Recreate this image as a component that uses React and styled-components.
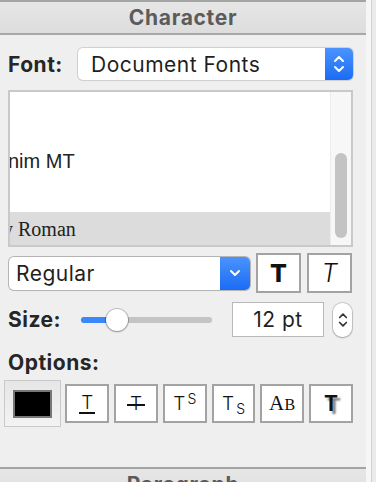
import React from 'react'
import styled, { createGlobalStyle } from 'styled-components'

const GlobalStyle = createGlobalStyle`
  html, body {
    margin: 0;
    padding: 0;
    background: #ececec;
    font-family: Inter, "Noto Sans", sans-serif;
    color: #222;
  }
`

const Page = styled.div`
  display: flex;
  align-items: flex-start;
  width: 376px;
  height: 482px;
  overflow: hidden;
  background: #efefef;
`

const Panel = styled.div`
  width: 366px;
  flex: none;
  display: flex;
  flex-direction: column;
  background: #efefef;
  border-top: 2px solid #a4a4a4;
`

const Gutter = styled.div`
  flex: 1;
  align-self: stretch;
  background: linear-gradient(to right, #f6f6f6 0 5px, #d2d2d2 5px 6px, #ebebeb 6px);
`

const Header = styled.div`
  height: 31px;
  flex: none;
  display: flex;
  align-items: center;
  justify-content: center;
  background: linear-gradient(#e6e6e6, #dddddd);
  border-bottom: 2px solid #a8a8a8;
  border-top: ${p => (p.$top ? '2px solid #a4a4a4' : 'none')};
  font-size: 21px;
  font-weight: 700;
  color: #5b5b5b;
  letter-spacing: 0.7px;
  padding-bottom: ${p => (p.$top ? 6 : 0)}px;
`

const Body = styled.div`
  flex: none;
  display: flex;
  flex-direction: column;
  padding: 0 13px 40px 8px;
`

const Label = styled.div`
  font-size: 21px;
  font-weight: 700;
  color: #262626;
  letter-spacing: 0.5px;
  width: ${p => (p.$w ? `${p.$w}px` : 'auto')};
  flex: none;
`

const FontRow = styled.div`
  display: flex;
  align-items: center;
  justify-content: space-between;
  margin-top: 13px;
  height: 32px;
`

const Popup = styled.div`
  display: flex;
  width: ${p => p.$w}px;
  height: ${p => p.$h}px;
  border-radius: 5px;
  background: #fff;
  box-shadow: 0 0 0 1px ${p => p.$edge}, 0 1px 1px rgba(0, 0, 0, 0.08);
  overflow: hidden;
`

const PopupText = styled.div`
  flex: 1;
  display: flex;
  align-items: center;
  padding-left: ${p => p.$pad}px;
  font-size: 21px;
  letter-spacing: 0.5px;
  color: #1f1f1f;
`

const PopupArrow = styled.div`
  width: ${p => p.$w}px;
  display: flex;
  align-items: center;
  justify-content: center;
  background: linear-gradient(#4b93ff, #1a6cf3);
`

const List = styled.div`
  margin-top: 10px;
  height: 153px;
  display: flex;
  border: 2px solid #c9c9c9;
  background: #fff;
`

const Rows = styled.div`
  flex: 1;
  overflow: hidden;
`

const RowsInner = styled.div`
  margin-top: -16px;
`

const FontItem = styled.div`
  height: 34px;
  display: flex;
  align-items: center;
  white-space: nowrap;
  background: ${p => (p.$selected ? '#dcdcdc' : 'transparent')};
  font-family: ${p => (p.$serif ? '"Liberation Serif", serif' : '"Liberation Sans", sans-serif')};
  font-size: 20px;
  color: #222;
  span {
    margin-left: ${p => p.$shift}px;
  }
`

const ScrollTrack = styled.div`
  width: 20px;
  background: #f7f7f7;
  border-left: 1px solid #ececec;
  display: flex;
  justify-content: center;
`

const Thumb = styled.div`
  width: 12px;
  height: 85px;
  margin-top: 61px;
  border-radius: 6px;
  background: #c3c3c3;
`

const StyleRow = styled.div`
  display: flex;
  align-items: center;
  margin-top: 6px;
  height: 40px;
  padding-left: 1px;
  gap: 6px;
`

const StyleButton = styled.div`
  width: 41px;
  height: 36px;
  border: 2px solid #a3a3a3;
  background: #fff;
  display: flex;
  align-items: center;
  justify-content: center;
  font-size: 25px;
  font-weight: ${p => (p.$italic ? 300 : 800)};
  font-style: ${p => (p.$italic ? 'italic' : 'normal')};
  color: #111;
`

const SizeRow = styled.div`
  display: flex;
  align-items: center;
  margin-top: 9px;
  height: 35px;
`

const Slider = styled.div`
  position: relative;
  width: 131px;
  height: 6px;
  border-radius: 3px;
  background: #c4c4c4;
`

const SliderFill = styled.div`
  height: 100%;
  border-radius: 3px;
  background: #3a86fb;
`

const Knob = styled.div`
  position: absolute;
  top: 50%;
  width: 22px;
  height: 22px;
  margin: -11px 0 0 -11px;
  border-radius: 50%;
  background: #fff;
  box-shadow: 0 0 0 1px rgba(0, 0, 0, 0.2), 0 1px 2px rgba(0, 0, 0, 0.25);
`

const SizeField = styled.div`
  width: 90px;
  height: 33px;
  margin-left: 20px;
  border: 1px solid #b9b9b9;
  background: #fff;
  display: flex;
  align-items: center;
  justify-content: center;
  font-size: 21px;
  letter-spacing: 0.5px;
  color: #1f1f1f;
`

const Stepper = styled.div`
  width: 19px;
  height: 34px;
  margin-left: 9px;
  border-radius: 9px;
  background: #fff;
  box-shadow: 0 0 0 1px rgba(0, 0, 0, 0.15), 0 1px 2px rgba(0, 0, 0, 0.2);
  display: flex;
  align-items: center;
  justify-content: center;
`

const OptionsLabel = styled(Label)`
  margin-top: 14px;
  height: 24px;
  line-height: 24px;
`

const OptionsRow = styled.div`
  display: flex;
  align-items: center;
  margin-top: 5px;
  margin-left: -4px;
  height: 47px;
  gap: 5px;
`

const ColorWell = styled.div`
  width: 57px;
  height: 45px;
  border: 1px solid #c9c9c9;
  background: linear-gradient(#e6e6e6, #f3f3f3);
  display: flex;
  align-items: center;
  justify-content: center;
  margin-right: -1px;
`

const Swatch = styled.div`
  width: 35px;
  height: 24px;
  background: #000;
  border: 2px solid #777;
`

const OptionButton = styled.div`
  width: 41px;
  height: 35px;
  border: 2px solid #a3a3a3;
  background: #fff;
  display: flex;
  align-items: center;
  justify-content: center;
  color: #111;
  font-size: 19px;
  font-weight: 300;
`

const Under = styled.span`
  display: inline-block;
  padding: 0 2px 1px;
  line-height: 17px;
  border-bottom: 2px solid #111;
`

const Strike = styled.span`
  position: relative;
  display: inline-block;
  &::after {
    content: '';
    position: absolute;
    left: -3px;
    right: -3px;
    top: 52%;
    height: 2px;
    background: #111;
  }
`

const Script = styled.span`
  font-size: 14px;
  position: relative;
  top: ${p => (p.$up ? -5 : 5)}px;
  margin-left: 2px;
`

const SmallCaps = styled.span`
  font-family: "Liberation Serif", serif;
  font-size: 21px;
  font-weight: 400;
  letter-spacing: 0.5px;
  small {
    font-size: 16px;
  }
`

const Shadowed = styled.span`
  font-size: 21px;
  font-weight: 700;
  text-shadow: 3px 3px 2px rgba(0, 0, 0, 0.5);
`

const Chevrons = ({ color, both = true, w = 12 }) => (
  <svg width={w} height={both ? 20 : 10} viewBox={both ? '0 0 12 20' : '0 5 12 10'} fill="none"
    stroke={color} strokeWidth="2" strokeLinecap="round" strokeLinejoin="round">
    {both && <path d="M2 7 L6 3 L10 7" />}
    <path d="M2 13 L6 17 L10 13" transform={both ? '' : 'translate(0 -5)'} />
  </svg>
)

export default function App() {
  const size = 0.275
  return (
    <Page>
      <GlobalStyle />
      <Panel>
        <Header>Character</Header>
        <Body>
          <FontRow>
            <Label>Font:</Label>
            <Popup $w={275} $h={32} $edge="#d0d0d0">
              <PopupText $pad={13}>Document Fonts</PopupText>
              <PopupArrow $w={28}><Chevrons color="#fff" /></PopupArrow>
            </Popup>
          </FontRow>

          <List>
            <Rows>
              <RowsInner>
                <FontItem />
                <FontItem />
                <FontItem $shift={-2}><span>nim MT</span></FontItem>
                <FontItem />
                <FontItem $selected $serif $shift={-7}><span>y Roman</span></FontItem>
              </RowsInner>
            </Rows>
            <ScrollTrack><Thumb /></ScrollTrack>
          </List>

          <StyleRow>
            <Popup $w={241} $h={33} $edge="#b5b5b5">
              <PopupText $pad={7}>Regular</PopupText>
              <PopupArrow $w={30}><Chevrons color="#fff" both={false} /></PopupArrow>
            </Popup>
            <StyleButton>T</StyleButton>
            <StyleButton $italic>T</StyleButton>
          </StyleRow>

          <SizeRow>
            <Label $w={73}>Size:</Label>
            <Slider>
              <SliderFill style={{ width: `${size * 100}%` }} />
              <Knob style={{ left: `${size * 100}%` }} />
            </Slider>
            <SizeField>12 pt</SizeField>
            <Stepper><Chevrons color="#333" w={10} /></Stepper>
          </SizeRow>

          <OptionsLabel>Options:</OptionsLabel>
          <OptionsRow>
            <ColorWell><Swatch /></ColorWell>
            <OptionButton><Under>T</Under></OptionButton>
            <OptionButton><Strike>T</Strike></OptionButton>
            <OptionButton>T<Script $up>S</Script></OptionButton>
            <OptionButton>T<Script>S</Script></OptionButton>
            <OptionButton><SmallCaps>A<small>B</small></SmallCaps></OptionButton>
            <OptionButton><Shadowed>T</Shadowed></OptionButton>
          </OptionsRow>
        </Body>
        <Header $top>Paragraph</Header>
      </Panel>
      <Gutter />
    </Page>
  )
}
